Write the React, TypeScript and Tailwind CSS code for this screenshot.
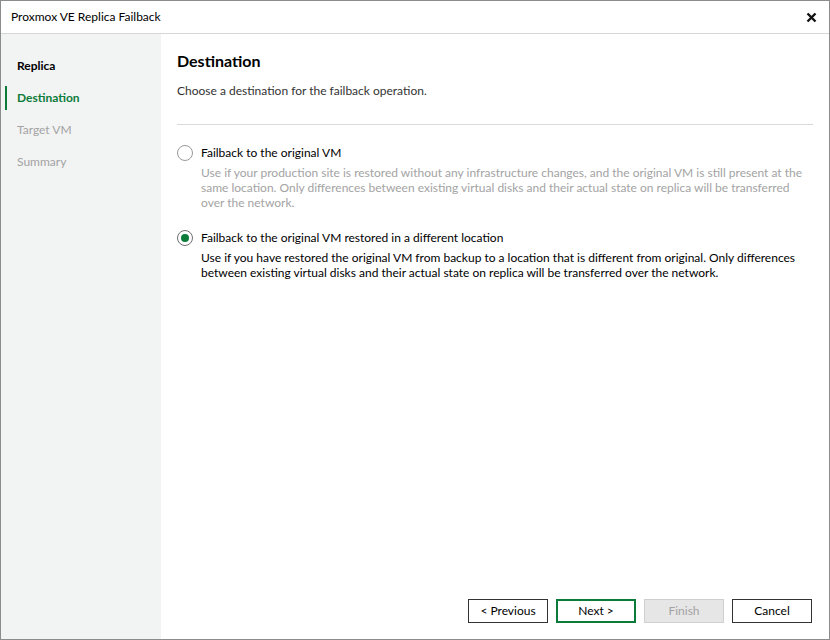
const steps = [
  { name: "Replica", state: "done" },
  { name: "Destination", state: "active" },
  { name: "Target VM", state: "todo" },
  { name: "Summary", state: "todo" },
];

const options = [
  {
    label: "Failback to the original VM",
    text: "Use if your production site is restored without any infrastructure changes, and the original VM is still present at the same location. Only differences between existing virtual disks and their actual state on replica will be transferred over the network.",
    checked: false,
  },
  {
    label: "Failback to the original VM restored in a different location",
    text: "Use if you have restored the original VM from backup to a location that is different from original. Only differences between existing virtual disks and their actual state on replica will be transferred over the network.",
    checked: true,
  },
];

function Radio({ checked }: { checked: boolean }) {
  return (
    <span
      className={`w-[16px] h-[16px] rounded-full border bg-white flex items-center justify-center shrink-0 ${
        checked ? "border-[#6f6f6f]" : "border-[#9a9a9a]"
      }`}
    >
      {checked && <span className="w-[8px] h-[8px] rounded-full bg-[#0b7b39]" />}
    </span>
  );
}

export default function App() {
  return (
    <div
      className="w-[830px] h-[640px] border border-[#8c8c8c] bg-white flex flex-col text-[12px] text-black"
      style={{ fontFamily: "Lato, 'Liberation Sans', sans-serif" }}
    >
      <div className="h-[33px] shrink-0 border-b border-[#d6d6d6] flex items-center justify-between pl-[10px] pr-[12px]">
        <span>Proxmox VE Replica Failback</span>
        <svg width="11" height="11" viewBox="0 0 11 11">
          <path d="M1.5 1.5 L9.5 9.5 M9.5 1.5 L1.5 9.5" stroke="#111" strokeWidth="2.4" />
        </svg>
      </div>

      <div className="flex-1 flex min-h-0">
        <aside className="w-[160px] shrink-0 bg-[#f2f3f3] pt-[16px]">
          {steps.map((s) => (
            <div key={s.name} className="h-[32px] flex items-center relative">
              {s.state === "active" && (
                <span className="absolute left-[4px] top-[4px] w-[2px] h-[24px] bg-[#0b7b39]" />
              )}
              <span
                className={`pl-[16px] ${
                  s.state === "done"
                    ? "font-bold text-black"
                    : s.state === "active"
                    ? "font-bold text-[#0b7b39]"
                    : "text-[#a3a3a3]"
                }`}
              >
                {s.name}
              </span>
            </div>
          ))}
        </aside>

        <main className="flex-1 flex flex-col pl-[16px] pr-[16px] pb-[16px]">
          <h1 className="mt-[17px] text-[16px] leading-[20px] font-bold">Destination</h1>
          <p className="mt-[12px] leading-[15px] text-[#333]">Choose a destination for the failback operation.</p>
          <div className="mt-[26px] h-px bg-[#d9d9d9]" />

          <div className="mt-[20px] flex flex-col gap-[20px]">
            {options.map((o) => (
              <div key={o.label} className="flex gap-[8px]">
                <Radio checked={o.checked} />
                <div className="flex flex-col">
                  <span className="leading-[16px]">{o.label}</span>
                  <span
                    className={`mt-[4px] leading-[15px] ${o.checked ? "text-black" : "text-[#a3a3a3]"}`}
                  >
                    {o.text}
                  </span>
                </div>
              </div>
            ))}
          </div>

          <div className="mt-auto flex justify-end gap-[8px] pr-px">
            <button className="w-[80px] h-[24px] border border-[#333] bg-white">&lt; Previous</button>
            <button className="w-[80px] h-[24px] border-2 border-[#0b7b39] bg-white">Next &gt;</button>
            <button className="w-[80px] h-[24px] border border-[#cfcfcf] bg-[#e6e6e6] text-[#a3a3a3]">Finish</button>
            <button className="w-[80px] h-[24px] border border-[#333] bg-white">Cancel</button>
          </div>
        </main>
      </div>
    </div>
  );
}
